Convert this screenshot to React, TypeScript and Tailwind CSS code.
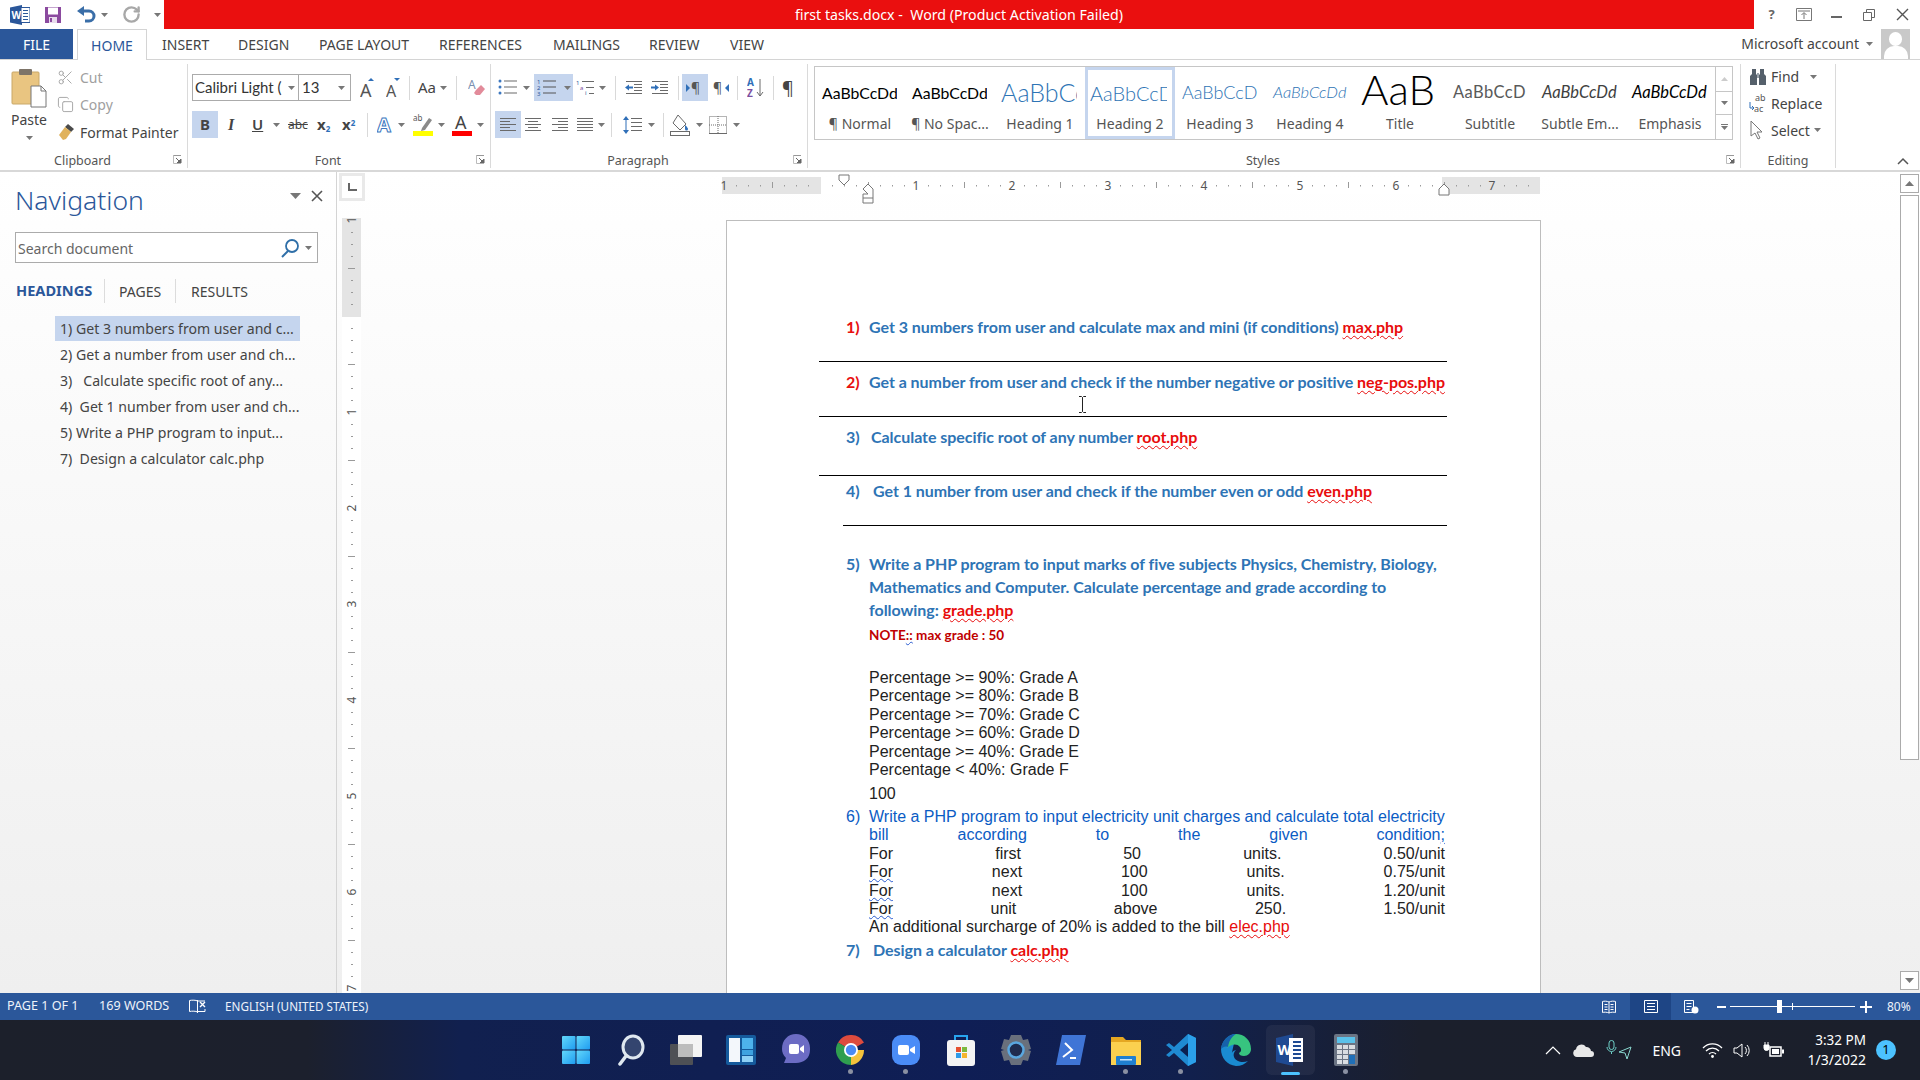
import { Copy, RotateCcw, Scissors } from "lucide-react";
import type { ReactNode } from "react";

const gray = "#6a6a6a";
const blue = "#2b579a";

const tabs = [
  { label: "INSERT", width: "w-[76px]" },
  { label: "DESIGN", width: "w-[81px]" },
  { label: "PAGE LAYOUT", width: "w-[120px]" },
  { label: "REFERENCES", width: "w-[114px]" },
  { label: "MAILINGS", width: "w-[96px]" },
  { label: "REVIEW", width: "w-[81px]" },
  { label: "VIEW", width: "w-[60px]" },
];

const navItems = [
  "2) Get a number from user and ch...",
  "3)\u00a0\u00a0 Calculate specific root of any...",
  "4)\u00a0 Get 1 number from user and ch...",
  "5) Write a PHP program to input...",
  "7)\u00a0 Design a calculator calc.php",
];

const grades = [
  "Percentage >= 90%: Grade A",
  "Percentage >= 80%: Grade B",
  "Percentage >= 70%: Grade C",
  "Percentage >= 60%: Grade D",
  "Percentage >= 40%: Grade E",
  "Percentage < 40%: Grade F",
];

const Caret = ({ className = "" }: { className?: string }) => (
  <svg width="7" height="4" viewBox="0 0 7 4" className={`shrink-0 ${className}`}>
    <path d="M0 0h7L3.5 4z" fill="#777" />
  </svg>
);

const Launcher = () => (
  <svg width="9" height="9" viewBox="0 0 9 9" className="shrink-0">
    <path d="M.5 4V.5H8" fill="none" stroke="#999" />
    <path d="M.5.5V8.5H4" fill="none" stroke="#bbb" />
    <path d="M3 3l4 4M8 4v4H4z" fill="#666" stroke="#666" />
  </svg>
);

const Sep = ({ className = "" }: { className?: string }) => (
  <div className={`w-px h-[24px] bg-[#d9d9d9] shrink-0 ${className}`} />
);

// lines for the align / list buttons
const Lines = ({ rows, width = 18 }: { rows: [number, number][]; width?: number }) => (
  <svg width={width} height="16" viewBox={`0 0 ${width} 16`}>
    {rows.map(([x, w], i) => (
      <rect key={i} x={x} y={1 + i * 3} width={w} height="1" fill={gray} />
    ))}
  </svg>
);

const Bullets = () => (
  <svg width="20" height="17" viewBox="0 0 20 17">
    {[2, 8, 14].map((y) => (
      <g key={y}>
        <circle cx="2" cy={y} r="1.5" fill="#3d78c0" />
        <rect x="6" y={y - 0.5} width="13" height="1" fill={gray} />
      </g>
    ))}
  </svg>
);

const Numbering = () => (
  <svg width="20" height="17" viewBox="0 0 20 17">
    {[2, 8, 14].map((y, i) => (
      <g key={y}>
        <text x="0" y={y + 2.5} fontSize="6" fill={blue} fontFamily="Noto Sans">
          {i + 1}
        </text>
        <rect x="6" y={y - 0.5} width="13" height="1" fill="#555" />
      </g>
    ))}
  </svg>
);

const Multilevel = () => (
  <svg width="20" height="17" viewBox="0 0 20 17">
    <text x="0" y="6" fontSize="6" fill={blue} fontFamily="Noto Sans">1</text>
    <text x="4" y="11" fontSize="6" fill="#7b4fa0" fontFamily="Noto Sans">a</text>
    <text x="9" y="16" fontSize="6" fill={blue} fontFamily="Noto Sans">i</text>
    <rect x="6" y="2" width="12" height="1" fill={gray} />
    <rect x="10" y="8" width="8" height="1" fill={gray} />
    <rect x="13" y="14" width="5" height="1" fill={gray} />
  </svg>
);

const Indent = ({ dir }: { dir: "dec" | "inc" }) => (
  <svg width="18" height="15" viewBox="0 0 18 15">
    {[1, 4, 7, 10, 13].map((y) => (
      <rect key={y} x={y === 1 || y === 13 ? 1 : 9} y={y} width={y === 1 || y === 13 ? 16 : 8} height="1" fill={gray} />
    ))}
    <path
      d={dir === "dec" ? "M0 7.5L4 4.5v2h4v2H4v2z" : "M8 7.5L4 4.5v2H0v2h4v2z"}
      fill="#2f6fb8"
    />
  </svg>
);

const Pilcrow = ({ arrow }: { arrow: "left" | "right" }) => (
  <svg width="18" height="16" viewBox="0 0 18 16">
    {arrow === "left" ? (
      <path d="M0 4l4 4-4 4z" fill="#2f6fb8" />
    ) : (
      <path d="M18 4l-4 4 4 4z" fill="#2f6fb8" />
    )}
    <text x={arrow === "left" ? 5 : 2} y="13" fontSize="14" fill="#555" fontFamily="Noto Sans">
      ¶
    </text>
  </svg>
);

const Sort = () => (
  <svg width="18" height="22" viewBox="0 0 18 22">
    <text x="0" y="9" fontSize="10" fontWeight="700" fill="#2f6fb8" fontFamily="Noto Sans">A</text>
    <text x="0" y="20" fontSize="10" fontWeight="700" fill="#7b4fa0" fontFamily="Noto Sans">Z</text>
    <path d="M13 2v17M10 15l3 4 3-4" fill="none" stroke={gray} />
  </svg>
);

const LineSpacing = () => (
  <svg width="20" height="20" viewBox="0 0 20 20">
    <path d="M3 1L0 5h6zM3 19l3-4H0zM2.5 5h1v10h-1z" fill="#2f6fb8" />
    {[3, 7, 11, 15].map((y) => (
      <rect key={y} x="8" y={y} width="11" height="1" fill={gray} />
    ))}
  </svg>
);

const Shading = () => (
  <svg width="20" height="22" viewBox="0 0 20 22">
    <path d="M8 1l8 9-6 6-7-7z" fill="#fff" stroke={gray} />
    <path d="M15 11c2 2 3 3 3 4a1.5 1.5 0 0 1-3 0z" fill="#2f6fb8" />
    <rect x="0.5" y="17.5" width="19" height="4" fill="#fff" stroke={gray} />
  </svg>
);

const Borders = () => (
  <svg width="18" height="18" viewBox="0 0 18 18">
    <path d="M.5 .5h17v17H.5zM9 0v18M0 9h18" fill="none" stroke={gray} strokeDasharray="1 1" />
    <path d="M0 17.5h18" stroke={gray} />
  </svg>
);

const Paste = () => (
  <svg width="36" height="40" viewBox="0 0 36 40">
    <rect x="1" y="4" width="27" height="32" rx="1" fill="#e9c581" stroke="#c9a868" />
    <rect x="8" y="1" width="13" height="6" rx="1" fill="#7d7468" />
    <path d="M20 18h10l5 5v16H20z" fill="#fff" stroke="#777" />
    <path d="M30 18v5h5" fill="none" stroke="#777" />
  </svg>
);

const Painter = () => (
  <svg width="18" height="18" viewBox="0 0 18 18">
    <path d="M11 1l6 5-3 3-6-5z" fill="#4a4a4a" />
    <path d="M8 4l6 5-5 7-3 1-4-5z" fill="#e0b25c" />
  </svg>
);

const Eraser = () => (
  <svg width="17" height="20" viewBox="0 0 17 20">
    <text x="0" y="11" fontSize="12" fill="#7a8fb0" fontFamily="Noto Sans">A</text>
    <path d="M8 12l5-5 4 4-5 6H8l-2-2z" fill="#e28b9a" />
  </svg>
);

const TextEffect = () => (
  <svg width="18" height="20" viewBox="0 0 18 20">
    <text
      x="0"
      y="17"
      fontSize="20"
      fontWeight="700"
      fill="#fff"
      stroke="#3d78c0"
      strokeWidth="1"
      fontFamily="Noto Sans"
    >
      A
    </text>
  </svg>
);

const Highlight = () => (
  <svg width="20" height="23" viewBox="0 0 20 23">
    <text x="0" y="8" fontSize="8" fill="#555" fontFamily="Noto Sans">ab</text>
    <path d="M9 15l7-10 3 2-7 10-4 1z" fill="#8a8a8a" />
    <rect y="18" width="20" height="5" fill="#ffff00" />
  </svg>
);

const FontColor = () => (
  <svg width="20" height="24" viewBox="0 0 20 24">
    <text x="3" y="16" fontSize="18" fill="#444" fontFamily="Noto Sans">A</text>
    <rect y="18" width="20" height="5" fill="#ff0000" />
  </svg>
);

const GrowFont = ({ up }: { up: boolean }) => (
  <svg width="15" height="21" viewBox="0 0 15 21">
    <text x="0" y="20" fontSize={up ? 18 : 16} fill="#555" fontFamily="Noto Sans">A</text>
    {up ? <path d="M8 4l3-3 3 3z" fill="#2f6fb8" /> : <path d="M8 1h6l-3 3z" fill="#2f6fb8" />}
  </svg>
);

const Binoculars = () => (
  <svg width="18" height="18" viewBox="0 0 18 18">
    <path d="M3 1h4v5l1 1v10H1V8l2-2zM11 1h4v5l2 2v9h-7V7l1-1z" fill="#55606b" />
    <rect x="8" y="5" width="2" height="5" fill="#9aa3ab" />
  </svg>
);

const ReplaceIcon = () => (
  <svg width="18" height="22" viewBox="0 0 18 22">
    <text x="6" y="8" fontSize="9" fill="#555" fontFamily="Noto Sans">ab</text>
    <text x="5" y="19" fontSize="9" fill="#555" fontFamily="Noto Sans">ac</text>
    <path d="M1 9v6h3M3 13l2 2-2 2" fill="none" stroke="#2f6fb8" />
  </svg>
);

const SelectIcon = () => (
  <svg width="14" height="20" viewBox="0 0 14 20">
    <path d="M2 1v15l4-3 3 6 2-1-3-6h5z" fill="#fff" stroke="#777" />
  </svg>
);

const WordLogo = () => (
  <svg width="20" height="20" viewBox="0 0 20 20">
    <path d="M0 2.5L12 0v20L0 17.5z" fill="#2b579a" />
    <rect x="11" y="2.5" width="9" height="15" fill="#fff" stroke="#2b579a" />
    {[5, 8, 11, 14].map((y) => (
      <rect key={y} x="13" y={y} width="5" height="1" fill="#2b579a" />
    ))}
    <text x="1.5" y="14" fontSize="10" fontWeight="700" fill="#fff" fontFamily="Noto Sans">W</text>
  </svg>
);

const SaveIcon = () => (
  <svg width="18" height="18" viewBox="0 0 18 18">
    <path d="M1 1h16v16H1z" fill="#8b4a9f" />
    <rect x="4" y="1.5" width="10" height="7" fill="#fff" />
    <rect x="5" y="11" width="8" height="6" fill="#e8dcec" />
    <rect x="6" y="12" width="2" height="4" fill="#8b4a9f" />
  </svg>
);

const UndoIcon = () => (
  <svg width="19" height="18" viewBox="0 0 19 18">
    <path d="M3 5h9a5 5 0 0 1 0 10H8" fill="none" stroke="#3a6ea8" strokeWidth="3" />
    <path d="M7 0v10L0 5z" fill="#3a6ea8" />
  </svg>
);

// horizontal ruler, a drawing with its own numbers
const HRuler = () => {
  const ticks = [];
  for (let x = 2; x < 818; x += 12) {
    const n = Math.round((x - 2) / 12) % 8;
    if (n === 0) continue;
    ticks.push(
      <rect key={x} x={x} y={n === 4 ? 5 : 8} width="1" height={n === 4 ? 6 : 1.5} fill="#9a9a9a" />
    );
  }
  return (
    <svg width="818" height="27" viewBox="0 0 818 27" className="overflow-visible block">
      <rect width="818" height="17" fill="#e4e4e4" />
      <rect x="99" width="621" height="17" fill="#fff" />
      {ticks}
      {["1", "", "1", "2", "3", "4", "5", "6", "7"].map((t, i) =>
        t ? (
          <text key={i} x={2 + i * 96} y="13" fontSize="12" textAnchor="middle" fill="#555" fontFamily="Noto Sans">
            {t}
          </text>
        ) : null
      )}
      <path d="M117 -2h10v5l-5 5-5-5z" fill="#fff" stroke="#777" />
      <path d="M146 17l-5-5 5-5 5 5v14h-10v-9z" fill="#fff" stroke="#777" />
      <path d="M141 21h10" stroke="#777" />
      <path d="M722 7l5 5v6h-10v-6z" fill="#fff" stroke="#777" />
    </svg>
  );
};

const VRuler = () => {
  const ticks = [];
  for (let y = 2; y < 775; y += 12) {
    const n = Math.round((y - 2) / 12) % 8;
    if (n === 0) continue;
    ticks.push(
      <rect key={y} x={n === 4 ? 6 : 9} y={y} width={n === 4 ? 7 : 2} height="1" fill="#9a9a9a" />
    );
  }
  return (
    <svg width="19" height="775" viewBox="0 0 19 775" className="block">
      <rect width="19" height="775" fill="#fff" />
      <rect width="19" height="99" fill="#e4e4e4" />
      {ticks}
      {["1", "", "1", "2", "3", "4", "5", "6", "7"].map((t, i) => {
        const y = 2 + i * 96;
        return t ? (
          <text
            key={i}
            x="10"
            y={y}
            fontSize="12"
            textAnchor="middle"
            fill="#555"
            fontFamily="Noto Sans"
            transform={`rotate(-90 10 ${y}) translate(0 4)`}
          >
            {t}
          </text>
        ) : null;
      })}
    </svg>
  );
};

// taskbar icons
const WinIcon = () => (
  <svg width="30" height="30" viewBox="0 0 30 30">
    <defs>
      <linearGradient id="win" x1="0" y1="0" x2="1" y2="1">
        <stop offset="0" stopColor="#63d8fb" />
        <stop offset="1" stopColor="#1f9cf0" />
      </linearGradient>
    </defs>
    <rect x="1" y="1" width="13.5" height="13.5" rx="1" fill="url(#win)" />
    <rect x="15.5" y="1" width="13.5" height="13.5" rx="1" fill="url(#win)" />
    <rect x="1" y="15.5" width="13.5" height="13.5" rx="1" fill="url(#win)" />
    <rect x="15.5" y="15.5" width="13.5" height="13.5" rx="1" fill="url(#win)" />
  </svg>
);

const SearchTask = () => (
  <svg width="28" height="32" viewBox="0 0 28 32">
    <ellipse cx="16" cy="13" rx="10" ry="11" fill="#34456f" stroke="#dfe8f0" strokeWidth="3" />
    <path d="M9 22L3 30" stroke="#dfe8f0" strokeWidth="3.5" strokeLinecap="round" />
  </svg>
);

const TaskView = () => (
  <svg width="32" height="30" viewBox="0 0 32 30">
    <rect x="8" y="0" width="24" height="22" rx="1" fill="#f4f4f4" />
    <rect x="0" y="9" width="23" height="21" rx="1" fill="#555" fillOpacity="0.9" />
    <rect x="8" y="9" width="15" height="13" fill="#bdbdbd" />
  </svg>
);

const Widgets = () => (
  <svg width="30" height="30" viewBox="0 0 30 30">
    <rect width="30" height="30" rx="2" fill="#155a9c" />
    <rect x="3" y="3" width="11" height="24" fill="#f3f7fb" />
    <rect x="16" y="3" width="11" height="11" fill="#4db2ec" />
    <rect x="16" y="15" width="11" height="5" fill="#3ea2e0" />
    <rect x="16" y="21" width="11" height="6" fill="#8dd0f5" />
  </svg>
);

const TeamsChat = () => (
  <svg width="30" height="32" viewBox="0 0 30 32">
    <path d="M15 0c8 0 14 6 14 14v2c0 8-6 13-14 13H3l2-5C2 21 1 18 1 15 1 6 7 0 15 0z" fill="#6c6cc4" />
    <rect x="8" y="10" width="10" height="10" rx="2" fill="#fff" />
    <path d="M19 14l4-3v8l-4-3z" fill="#fff" />
  </svg>
);

const Chrome = () => (
  <svg width="30" height="30" viewBox="0 0 30 30">
    <path d="M15 15L2 7.5A15 15 0 0 1 28 7.5z" fill="#dd4b3e" />
    <path d="M15 15H28A15 15 0 0 1 15 30z" fill="#f5c33b" />
    <path d="M15 15L15 30A15 15 0 0 1 2 7.5z" fill="#2f9e4f" />
    <circle cx="15" cy="15" r="7" fill="#fff" />
    <circle cx="15" cy="15" r="5.2" fill="#4b8bf4" />
  </svg>
);

const ZoomIcon = () => (
  <svg width="28" height="30" viewBox="0 0 28 30">
    <rect width="28" height="30" rx="9" fill="#4a8cf7" />
    <rect x="6" y="10" width="11" height="10" rx="2" fill="#fff" />
    <path d="M18 14l5-3v8l-5-3z" fill="#fff" />
  </svg>
);

const Store = () => (
  <svg width="30" height="32" viewBox="0 0 30 32">
    <path d="M9 7V2h12v5" fill="none" stroke="#27a4ee" strokeWidth="2" />
    <rect x="1" y="6" width="28" height="26" rx="3" fill="#f4f4f4" />
    <rect x="10" y="13" width="5" height="5" fill="#e5502f" />
    <rect x="16" y="13" width="5" height="5" fill="#7cb93f" />
    <rect x="10" y="19" width="5" height="5" fill="#2f9be8" />
    <rect x="16" y="19" width="5" height="5" fill="#f5b52e" />
  </svg>
);

const Gear = () => (
  <svg width="30" height="32" viewBox="0 0 30 32">
    <path
      d="M10 1h10l2 5 5-1 3 10-3 1 3 1-3 10-5-1-2 5H10l-2-5-5 1L0 17l3-1-3-1L3 5l5 1z"
      fill="#69707c"
    />
    <circle cx="15" cy="16" r="7.5" fill="#1f2c4f" stroke="#5aa7df" strokeWidth="2.5" />
  </svg>
);

const Terminal = () => (
  <svg width="30" height="30" viewBox="0 0 30 30">
    <path d="M6 0h24l-6 30H0z" fill="#3f75d6" />
    <path d="M9 8l7 7-9 7" fill="none" stroke="#fff" strokeWidth="2" />
    <path d="M14 23h6" stroke="#fff" strokeWidth="2" />
  </svg>
);

const Explorer = () => (
  <svg width="30" height="30" viewBox="0 0 30 30">
    <path d="M0 2h12l3 3h15v25H0z" fill="#e5a722" />
    <path d="M0 7h30v23H0z" fill="#fbd04f" />
    <rect x="5" y="21" width="20" height="9" rx="1" fill="#1f7fd0" />
    <rect x="9" y="24" width="12" height="1.5" fill="#c7e4fb" />
  </svg>
);

const VSCode = () => (
  <svg width="30" height="32" viewBox="0 0 30 32">
    <path d="M22 0l8 4v24l-8 4L8 19l-5 4-3-2 6-5-6-5 3-2 5 4z" fill="#1f8ad2" />
    <path d="M22 9l-8 7 8 7z" fill="#0b1f4f" />
    <path d="M22 0l8 4v24l-8 4z" fill="#2ba0ea" />
  </svg>
);

const Edge = () => (
  <svg width="30" height="32" viewBox="0 0 30 32">
    <path d="M15 0C7 0 1 7 0 15c0 9 6 16 15 17 5 0 9-2 12-5-5 2-12 1-14-4-1-3 0-5 2-7-4 1-5 4-5 7" fill="#1a8bd1" />
    <path d="M15 0c8 0 15 6 15 15 0 4-3 7-7 7-3 0-5-1-5-3 2-1 3-3 1-6-3-4-9-3-13 1C7 8 10 1 15 0z" fill="#37c47f" />
    <path d="M7 13C8 5 14 0 15 0 8 0 1 6 0 15c2-2 4-3 7-2z" fill="#1662ab" />
  </svg>
);

const WordTask = () => (
  <svg width="30" height="32" viewBox="0 0 30 32">
    <path d="M0 4L17 0v32L0 28z" fill="#1f4a92" />
    <rect x="13" y="4" width="14" height="24" fill="#fff" />
    {[7, 11, 15, 19, 23].map((y) => (
      <rect key={y} x="17" y={y} width="8" height="2" fill="#1f4a92" />
    ))}
    <text x="1.5" y="21" fontSize="14" fontWeight="700" fill="#fff" fontFamily="Noto Sans">W</text>
  </svg>
);

const Calculator = () => (
  <svg width="24" height="32" viewBox="0 0 24 32">
    <rect width="24" height="32" rx="2" fill="#6b7484" />
    <rect x="3" y="3" width="18" height="6" fill="#5ac1ea" />
    {[11, 16, 21, 26].flatMap((y) =>
      [3, 9].map((x) => <rect key={`${x}${y}`} x={x} y={y} width="5" height="4" fill="#d9dde2" />)
    )}
    {[11, 16].map((y) => <rect key={y} x="15" y={y} width="6" height="4" fill="#d9dde2" />)}
    <rect x="15" y="21" width="6" height="9" fill="#1f6fb8" />
  </svg>
);

const taskItems = [
  { icon: <WinIcon /> },
  { icon: <SearchTask /> },
  { icon: <TaskView /> },
  { icon: <Widgets /> },
  { icon: <TeamsChat /> },
  { icon: <Chrome />, running: true },
  { icon: <ZoomIcon />, running: true },
  { icon: <Store /> },
  { icon: <Gear /> },
  { icon: <Terminal /> },
  { icon: <Explorer />, running: true },
  { icon: <VSCode />, running: true },
  { icon: <Edge /> },
  { icon: <WordTask />, active: true },
  { icon: <Calculator />, running: true },
];

const styleCells = [
  { sample: "AaBbCcDd", label: "¶ Normal", cls: "text-[15.8px] text-black font-['Lato',sans-serif] pl-[4px]" },
  { sample: "AaBbCcDd", label: "¶ No Spac...", cls: "text-[15.8px] text-black font-['Lato',sans-serif] pl-[4px]" },
  { sample: "AaBbCc", label: "Heading 1", cls: "text-[25px] text-[#2e74b5] font-light font-['Lato',sans-serif] pl-[3px]" },
  { sample: "AaBbCcD", label: "Heading 2", cls: "text-[20px] text-[#2e74b5] font-light font-['Lato',sans-serif] pl-[2px]", selected: true },
  { sample: "AaBbCcD", label: "Heading 3", cls: "text-[18px] text-[#2e74b5] font-light font-['Lato',sans-serif] pl-[4px]" },
  { sample: "AaBbCcDd", label: "Heading 4", cls: "text-[16.5px] italic text-[#2e74b5] font-light font-['Lato',sans-serif] pl-[5px]" },
  { sample: "AaBb", label: "Title", cls: "text-[42px] leading-[42px] text-black font-light font-['Lato',sans-serif] pl-[3px] pb-[8px]" },
  { sample: "AaBbCcD", label: "Subtitle", cls: "text-[16.5px] text-[#595959] tracking-[0.4px] font-['Lato',sans-serif] pl-[5px]" },
  { sample: "AaBbCcDd", label: "Subtle Em...", cls: "text-[16.5px] italic text-[#404040] font-['Lato',sans-serif] pl-[4px]" },
  { sample: "AaBbCcDd", label: "Emphasis", cls: "text-[16.5px] italic text-black font-['Lato',sans-serif] pl-[4px]" },
];

const Group = ({ label, width, children, launcher = true }: { label: string; width: string; children: ReactNode; launcher?: boolean }) => (
  <div className={`${width} h-[104px] border-r border-[#dadada] flex flex-col shrink-0`}>
    <div className="h-[92px]">{children}</div>
    <div className={`relative flex-1 flex items-center justify-center text-[12.5px] leading-[14px] text-[#555] ${launcher ? "pr-[22px]" : ""}`}>
      {label}
      {launcher && (
        <span className="absolute right-[5px] top-[1px]">
          <Launcher />
        </span>
      )}
    </div>
  </div>
);

const Heading = ({ num, red, numW, children }: { num: string; red?: boolean; numW: string; children: ReactNode }) => (
  <div className="h-[22px] pb-[2px] flex items-center pl-[27px] font-['Lato',sans-serif] font-bold text-[16px] tracking-[-0.04px] text-[#2e74b5] whitespace-nowrap">
    <span className={`${numW} shrink-0 ${red ? "text-[#e81010]" : ""}`}>{num}</span>
    <span>{children}</span>
  </div>
);

const Php = ({ children }: { children: string }) => (
  <span className="text-[#e80c0c] underline decoration-wavy decoration-[#e80c0c] decoration-1 underline-offset-2">
    {children}
  </span>
);

const Squiggle = ({ children }: { children: string }) => (
  <span className="underline decoration-wavy decoration-[#2a5bd0] decoration-1 underline-offset-1">{children}</span>
);

const BodyRow = ({ words, color = "" }: { words: ReactNode[]; color?: string }) => (
  <div className={`h-[18.4px] ml-[50px] w-[576px] flex items-center justify-between ${color}`}>
    {words.map((w, i) => (
      <span key={i}>{w}</span>
    ))}
  </div>
);

export default function App() {
  return (
    <div className="w-[1920px] h-[1080px] flex flex-col overflow-hidden bg-white text-[#444] font-['Noto_Sans',sans-serif]">
      {/* Title bar */}
      <div className="h-[29px] flex shrink-0">
        <div className="w-[164px] flex items-center pl-[10px]">
          <WordLogo />
          <span className="ml-[14px]"><SaveIcon /></span>
          <span className="ml-[15px]"><UndoIcon /></span>
          <Caret className="ml-[5px]" />
          <RotateCcw size={19} strokeWidth={3} color="#a8a8a8" className="ml-[14px] -scale-x-100" />
          <Caret className="ml-[13px]" />
        </div>
        <div className="flex-1 bg-[#ea0f0f] flex items-center justify-center text-white text-[14.2px]">
          first tasks.docx -&nbsp; Word (Product Activation Failed)
        </div>
        <div className="w-[166px] flex items-center text-[#666]">
          <span className="w-[17px] ml-[9px] text-center text-[13px] font-bold">?</span>
          <svg width="16" height="13" viewBox="0 0 16 13" className="ml-[16px]">
            <path d="M.5.5h15v12H.5zM2 3h12M8 11V5M5.5 7L8 4.5 10.5 7" fill="none" stroke="#777" />
          </svg>
          <div className="w-[11px] h-[2px] bg-[#666] ml-[19px] mt-[5px]" />
          <svg width="12" height="12" viewBox="0 0 12 12" className="ml-[21px]">
            <path d="M3.5 3V.5h8v8H9M.5 3.5h8v8h-8z" fill="#fff" stroke="#666" />
          </svg>
          <svg width="13" height="13" viewBox="0 0 13 13" className="ml-[21px]">
            <path d="M1 1l11 11M12 1L1 12" stroke="#555" strokeWidth="1.4" />
          </svg>
        </div>
      </div>

      {/* Tabs */}
      <div className="h-[31px] flex shrink-0 border-b border-[#d4d4d4] text-[14px]">
        <div className="w-[73px] h-[30px] bg-[#2b579a] text-white flex items-center justify-center">FILE</div>
        <div className="ml-[4px] w-[70px] h-[31px] bg-white border-x border-t border-[#d4d4d4] text-[#2b579a] flex items-center justify-center">
          HOME
        </div>
        <div className="w-[15px]" />
        {tabs.map((t) => (
          <div key={t.label} className={`${t.width} flex items-center whitespace-nowrap`}>
            {t.label}
          </div>
        ))}
        <div className="ml-auto flex items-center">
          <span className="-mt-[2px]">Microsoft account</span>
          <Caret className="ml-[7px] mr-[8px]" />
          <div className="w-[29px] h-[30px] bg-[#c9c9c9] overflow-hidden flex flex-col items-center mr-[10px]">
            <div className="w-[13px] h-[15px] mt-[3px] rounded-full bg-white" />
            <div className="w-[24px] h-[14px] rounded-t-[10px] bg-white" />
          </div>
        </div>
      </div>

      {/* Ribbon */}
      <div className="h-[112px] flex shrink-0 pt-[4px] border-b-2 border-[#d8d8d8]">
        <Group label="Clipboard" width="w-[188px]">
          <div className="flex h-full">
            <div className="w-[57px] flex flex-col items-center pt-[4px] pl-[1px]">
              <Paste />
              <span className="text-[14px] leading-[20px] mt-[2px]">Paste</span>
              <Caret className="mt-[6px]" />
            </div>
            <div className="flex flex-col text-[14px] -mt-[1px]">
              <div className="h-[28px] flex items-center text-[#a0a0a0]">
                <Scissors size={17} strokeWidth={1.4} color="#a8a8a8" className="mr-[6px]" />Cut
              </div>
              <div className="h-[27px] flex items-center text-[#a0a0a0]">
                <Copy size={17} strokeWidth={1.4} color="#a8a8a8" className="mr-[6px]" />Copy
              </div>
              <div className="h-[28px] flex items-center whitespace-nowrap">
                <span className="mr-[5px]"><Painter /></span>Format Painter
              </div>
            </div>
          </div>
        </Group>

        <Group label="Font" width="w-[303px]">
          <div className="pt-[10px] pl-[4px]">
            <div className="h-[27px] flex items-center">
              <div className="w-[107px] h-[27px] border border-[#ababab] flex items-center pl-[2px] pr-[3px] text-[15px] text-[#333] font-['Lato',sans-serif] whitespace-nowrap justify-between">
                <span>Calibri Light (</span><Caret />
              </div>
              <div className="w-[53px] h-[27px] -ml-px border border-[#ababab] flex items-center pl-[3px] pr-[5px] text-[15px] text-[#333] justify-between font-['Lato',sans-serif]">
                <span>13</span><Caret />
              </div>
              <span className="ml-[9px] w-[15px]"><GrowFont up /></span>
              <span className="ml-[11px] w-[15px]"><GrowFont up={false} /></span>
              <Sep className="ml-[8px]" />
              <span className="ml-[8px] w-[20px] text-[15px] whitespace-nowrap">Aa</span>
              <Caret className="ml-[2px]" />
              <Sep className="ml-[9px]" />
              <span className="ml-[11px]"><Eraser /></span>
            </div>
            <div className="h-[27px] mt-[10px] flex items-center">
              <div className="w-[26px] h-[27px] bg-[#c5d5ee] flex items-center justify-center font-bold text-[15px]">B</div>
              <span className="ml-[10px] w-[10px] italic font-['Liberation_Serif',serif] font-bold text-[16px]">I</span>
              <span className="ml-[14px] w-[13px] text-[15px] font-semibold underline">U</span>
              <Caret className="ml-[8px]" />
              <span className="ml-[8px] w-[20px] text-[12px] line-through">abc</span>
              <span className="ml-[9px] w-[16px] text-[15px] font-bold whitespace-nowrap">x<sub className="text-[8px] text-[#2f6fb8]">2</sub></span>
              <span className="ml-[9px] w-[16px] text-[15px] font-bold whitespace-nowrap">x<sup className="text-[8px] text-[#2f6fb8]">2</sup></span>
              <Sep className="ml-[9px]" />
              <span className="ml-[9px] w-[18px]"><TextEffect /></span>
              <Caret className="ml-[3px]" />
              <span className="ml-[8px] w-[20px]"><Highlight /></span>
              <Caret className="ml-[5px]" />
              <span className="ml-[7px] w-[20px]"><FontColor /></span>
              <Caret className="ml-[5px]" />
            </div>
          </div>
        </Group>

        <Group label="Paragraph" width="w-[317px]">
          <div className="pt-[10px]">
            <div className="h-[27px] flex items-center pl-[7px]">
              <Bullets />
              <Caret className="ml-[5px]" />
              <div className="ml-[4px] w-[39px] h-[27px] bg-[#c5d5ee] flex items-center pl-[3px]">
                <Numbering />
                <Caret className="ml-[7px]" />
              </div>
              <span className="ml-[3px] w-[20px]"><Multilevel /></span>
              <Caret className="ml-[3px]" />
              <Sep className="ml-[9px]" />
              <span className="ml-[9px]"><Indent dir="dec" /></span>
              <span className="ml-[8px]"><Indent dir="inc" /></span>
              <Sep className="ml-[9px]" />
              <div className="ml-[3px] w-[26px] h-[27px] bg-[#c5d5ee] flex items-center justify-center"><Pilcrow arrow="left" /></div>
              <span className="ml-[3px]"><Pilcrow arrow="right" /></span>
              <Sep className="ml-[8px]" />
              <span className="ml-[9px]"><Sort /></span>
              <Sep className="ml-[8px]" />
              <span className="ml-[8px] text-[18px] leading-none">¶</span>
            </div>
            <div className="h-[27px] mt-[10px] flex items-center pl-[4px]">
              <div className="w-[26px] h-[27px] bg-[#c5d5ee] flex items-center justify-center">
                <Lines rows={[[1, 16], [1, 10], [1, 16], [1, 10], [1, 16]]} />
              </div>
              <span className="ml-[3px]"><Lines rows={[[1, 16], [4, 10], [1, 16], [4, 10], [1, 16]]} /></span>
              <span className="ml-[9px]"><Lines rows={[[1, 16], [7, 10], [1, 16], [7, 10], [1, 16]]} /></span>
              <span className="ml-[7px]"><Lines rows={[[1, 16], [1, 16], [1, 16], [1, 16], [1, 16]]} /></span>
              <Caret className="ml-[4px]" />
              <Sep className="ml-[6px]" />
              <span className="ml-[11px]"><LineSpacing /></span>
              <Caret className="ml-[5px]" />
              <Sep className="ml-[8px]" />
              <span className="ml-[6px]"><Shading /></span>
              <Caret className="ml-[6px]" />
              <span className="ml-[6px]"><Borders /></span>
              <Caret className="ml-[6px]" />
            </div>
          </div>
        </Group>

        <Group label="Styles" width="w-[933px]">
          <div className="pt-[2px] pl-[6px]">
            <div className="w-[919px] h-[74px] border border-[#c6c6c6] flex bg-white">
              {styleCells.map((s) => (
                <div
                  key={s.label}
                  className={`w-[90px] h-[72px] shrink-0 flex flex-col overflow-hidden ${s.selected ? "border-[3px] border-[#c5d5ee]" : "border-[3px] border-transparent"}`}
                >
                  <div className={`h-[45px] mr-[5px] flex items-center overflow-hidden whitespace-nowrap ${s.cls}`}>{s.sample}</div>
                  <div className="text-center text-[14px] text-[#555] whitespace-nowrap leading-[18px]">{s.label}</div>
                </div>
              ))}
              <div className="w-[17px] border-l border-[#c6c6c6] flex flex-col">
                <div className="h-[25px] flex items-center justify-center border-b border-[#c6c6c6]">
                  <svg width="7" height="4" viewBox="0 0 7 4"><path d="M3.5 0L7 4H0z" fill="#ccc" /></svg>
                </div>
                <div className="h-[23px] flex items-center justify-center border-b border-[#c6c6c6]"><Caret /></div>
                <div className="flex-1 flex flex-col items-center justify-center gap-[1px]">
                  <div className="w-[7px] h-px bg-[#777]" />
                  <Caret />
                </div>
              </div>
            </div>
          </div>
        </Group>

        <Group label="Editing" width="w-[95px]" launcher={false}>
          <div className="pl-[8px] -mt-[1px] text-[14px]">
            <div className="h-[27px] flex items-center">
              <span className="w-[22px]"><Binoculars /></span>Find<Caret className="ml-[11px]" />
            </div>
            <div className="h-[27px] flex items-center">
              <span className="w-[22px]"><ReplaceIcon /></span>Replace
            </div>
            <div className="h-[26px] flex items-center">
              <span className="w-[22px]"><SelectIcon /></span>Select<Caret className="ml-[4px]" />
            </div>
          </div>
        </Group>

        <div className="flex-1 flex items-end justify-end pr-[11px] pb-[5px]">
          <svg width="12" height="8" viewBox="0 0 12 8"><path d="M1 7l5-5 5 5" fill="none" stroke="#555" strokeWidth="1.5" /></svg>
        </div>
      </div>

      {/* Work area */}
      <div className="flex-1 min-h-0 flex bg-linear-to-b from-white to-[#efefef]">
        {/* Navigation pane */}
        <div className="w-[337px] shrink-0 border-r border-[#d4d4d4]">
          <div className="h-[60px] flex items-center pl-[15px] pr-[13px]">
            <span className="text-[26.5px] font-light text-[#2b579a] flex-1 -mt-[2px]">Navigation</span>
            <svg width="11" height="6" viewBox="0 0 11 6" className="mr-[10px] mb-[12px]"><path d="M0 0h11L5.5 6z" fill="#777" /></svg>
            <svg width="12" height="12" viewBox="0 0 12 12" className="mb-[12px]"><path d="M1 1l10 10M11 1L1 11" stroke="#555" strokeWidth="1.6" /></svg>
          </div>
          <div className="ml-[15px] w-[303px] h-[31px] border border-[#ababab] bg-white flex items-center pl-[2px] pr-[5px] text-[14px] text-[#666]">
            <span className="flex-1 mt-[2px]">Search document</span>
            <svg width="20" height="20" viewBox="0 0 20 20" className="mr-[5px]">
              <circle cx="12" cy="8" r="6" fill="none" stroke="#2f6fa8" strokeWidth="1.8" />
              <path d="M8 13l-6 6" stroke="#2f6fa8" strokeWidth="2" />
            </svg>
            <Caret />
          </div>
          <div className="h-[28px] mt-[14px] pl-[16px] flex items-center text-[14px]">
            <span className="w-[88px] font-bold text-[14.6px] text-[#2b579a]">HEADINGS</span>
            <div className="w-px h-[24px] bg-[#dcdcdc]" />
            <span className="ml-[14px] w-[56px]">PAGES</span>
            <div className="w-px h-[24px] bg-[#dcdcdc]" />
            <span className="ml-[15px]">RESULTS</span>
          </div>
          <div className="mt-[11px] ml-[55px] w-[245px] text-[14.1px] whitespace-nowrap">
            <div className="h-[25px] mb-px bg-[#c5d5ee] pl-[5px] flex items-center">1) Get 3 numbers from user and c...</div>
            {navItems.map((t) => (
              <div key={t} className="h-[26px] pl-[5px] flex items-center">{t}</div>
            ))}
          </div>
        </div>

        {/* Vertical ruler */}
        <div className="w-[29px] shrink-0 pl-[2px]">
          <div className="w-[26px] h-[28px] bg-[#e9e9e9] p-[3px] mt-[1px]">
            <div className="w-full h-full bg-white flex items-center justify-center">
              <div className="w-[9px] h-[8px] border-l-2 border-b-2 border-[#666]" />
            </div>
          </div>
          <div className="mt-[17px] pl-[3px]">
            <VRuler />
          </div>
        </div>

        {/* Document */}
        <div className="flex-1 min-w-0 flex flex-col relative">
          <div className="ml-[356px] mt-[5px] h-[17px]">
            <HRuler />
          </div>
          <div className="ml-[360px] w-[815px] flex-1 mt-[26px] bg-white border-x border-t border-[#bdbdbd] overflow-hidden pt-[96px] pl-[92px]">
            <div className="w-[628px]">
              <Heading num="1)" red numW="w-[23px]">
                Get 3 numbers from user and calculate max and mini (if conditions) <Php>max.php</Php>
              </Heading>
              <div className="mt-[22px] h-px bg-black" />
              <div className="mt-[10px]">
                <Heading num="2)" red numW="w-[23px]">
                  Get a number from user and check if the number negative or positive <Php>neg-pos.php</Php>
                </Heading>
              </div>
              <div className="mt-[22px] h-px bg-black" />
              <div className="mt-[10px]">
                <Heading num="3)" numW="w-[25px]">
                  Calculate specific root of any number <Php>root.php</Php>
                </Heading>
              </div>
              <div className="mt-[26px] h-px bg-black" />
              <div className="mt-[5px]">
                <Heading num="4)" numW="w-[27px]">
                  Get 1 number from user and check if the number even or odd <Php>even.php</Php>
                </Heading>
              </div>
              <div className="mt-[22px] ml-[24px] h-px bg-black" />

              <div className="mt-[26px] pl-[27px] flex font-['Lato',sans-serif] font-bold text-[16px] tracking-[-0.04px] leading-[23px] text-[#2e74b5] whitespace-nowrap">
                <span className="w-[23px] shrink-0">5)</span>
                <div>
                  <div>Write a PHP program to input marks of five subjects Physics, Chemistry, Biology,</div>
                  <div>Mathematics and Computer. Calculate percentage and grade according to</div>
                  <div>following: <Php>grade.php</Php></div>
                </div>
              </div>
              <div className="mt-[5px] ml-[50px] h-[18px] flex items-center font-['Lato',sans-serif] font-bold text-[13.5px] text-[#c00000] whitespace-nowrap">
                NOTE<Squiggle>::</Squiggle>&nbsp;max grade : 50
              </div>

              <div className="mt-[25px] ml-[50px] font-['Liberation_Sans',sans-serif] text-[16px] leading-[18.4px] text-[#222]">
                {grades.map((g) => (
                  <div key={g} className="h-[18.4px]">{g}</div>
                ))}
                <div className="mt-[5.6px] h-[18px]">100</div>
              </div>

              <div className="mt-[5px] font-['Liberation_Sans',sans-serif] text-[16px] leading-[18.4px] text-[#222]">
                <div className="h-[18.4px] flex items-center pl-[27px] text-[#0b5cc4] whitespace-nowrap">
                  <span className="w-[23px] shrink-0">6)</span>
                  <span>Write a PHP program to input electricity unit charges and calculate total electricity</span>
                </div>
                <BodyRow color="text-[#0b5cc4]" words={["bill", "according", "to", "the", "given", <>condition<Squiggle>;</Squiggle></>]} />
                <BodyRow words={["For", "first", "50", "units.", "0.50/unit"]} />
                <BodyRow words={[<Squiggle>For</Squiggle>, "next", "100", "units.", "0.75/unit"]} />
                <BodyRow words={[<Squiggle>For</Squiggle>, "next", "100", "units.", "1.20/unit"]} />
                <BodyRow words={[<Squiggle>For</Squiggle>, "unit", "above", "250.", "1.50/unit"]} />
                <div className="h-[18.4px] ml-[50px] whitespace-nowrap">
                  An additional surcharge of 20% is added to the bill{" "}
                  <span className="text-[#e80c0c] underline decoration-wavy decoration-[#e80c0c] decoration-1 underline-offset-2">elec.php</span>
                </div>
              </div>
              <div className="mt-[3px]">
                <Heading num="7)" numW="w-[27px]">
                  Design a calculator <Php>calc.php</Php>
                </Heading>
              </div>
            </div>
          </div>

          {/* mouse cursor over the page */}
          <svg width="9" height="17" viewBox="0 0 9 17" className="absolute left-[712px] top-[224px]">
            <path d="M1 .5h2.500L4.500 1.500 5.500 .5H8M4.500 1.500V15.500M1 16.500h2.500L4.500 15.500 5.500 16.500H8" fill="none" stroke="#222" />
          </svg>
        </div>

        {/* Scrollbar */}
        <div className="w-[20px] shrink-0 pt-[2px] flex flex-col">
          <div className="h-[19px] w-[19px] border border-[#ababab] bg-white flex items-center justify-center">
            <svg width="9" height="5" viewBox="0 0 9 5"><path d="M4.500 0L9 5H0z" fill="#777" /></svg>
          </div>
          <div className="mt-[2px] h-[565px] w-[19px] border border-[#ababab] bg-white" />
          <div className="flex-1" />
          <div className="h-[19px] w-[19px] border border-[#ababab] bg-white flex items-center justify-center mb-[3px]">
            <svg width="9" height="5" viewBox="0 0 9 5"><path d="M0 0h9L4.500 5z" fill="#777" /></svg>
          </div>
        </div>
      </div>

      {/* Status bar */}
      <div className="h-[27px] shrink-0 bg-[#2b579a] text-[#eef3fa] text-[12.6px] flex items-center">
        <span className="ml-[7px] w-[92px]">PAGE 1 OF 1</span>
        <span className="w-[90px]">169 WORDS</span>
        <svg width="17" height="15" viewBox="0 0 17 15">
          <path d="M8.500 2C7 1 3 1 .5 1.500v11C3 12 7 12 8.500 13zM8.500 1v13" fill="none" stroke="#fff" />
          <path d="M11 3l5 5M16 3l-5 5" stroke="#fff" strokeWidth="1.400" />
          <path d="M8.500 2h7.500M8.500 12.500h7.500V10" fill="none" stroke="#fff" />
        </svg>
        <span className="ml-[19px] text-[11.7px]">ENGLISH (UNITED STATES)</span>
        <div className="ml-auto flex items-center h-full">
          <svg width="14" height="14" viewBox="0 0 14 14">
            <path d="M7 2C5 1 2 1 .5 1.500v11C2 12 5 12 7 13c2-1 5-1 6.500-.5v-11C12 1 9 1 7 2zM7 2v11" fill="none" stroke="#fff" />
            <path d="M2.500 4.500h3M2.500 7h3M2.500 9.500h3M8.500 4.500h3M8.500 7h3M8.500 9.500h3" stroke="#fff" />
          </svg>
          <div className="ml-[14px] w-[41px] h-full bg-[#1e4585] flex items-center justify-center">
            <svg width="14" height="13" viewBox="0 0 14 13">
              <path d="M.5.5h13v12H.5zM3 3.500h8M3 6.500h8M3 9.500h8" fill="none" stroke="#fff" />
            </svg>
          </div>
          <svg width="15" height="14" viewBox="0 0 15 14" className="ml-[13px]">
            <path d="M.5.5h9v12H.5zM2.500 3.500h5M2.500 6.500h5M2.500 9.500h3" fill="none" stroke="#fff" />
            <circle cx="11" cy="10" r="3.500" fill="#fff" />
          </svg>
          <div className="ml-[18px] w-[9px] h-[2px] bg-white" />
          <div className="ml-[4px] w-[125px] h-px bg-white relative">
            <div className="absolute left-[47px] top-[-6px] w-[5px] h-[13px] bg-white" />
            <div className="absolute left-[62px] top-[-3px] w-px h-[7px] bg-white" />
          </div>
          <svg width="12" height="12" viewBox="0 0 12 12" className="ml-[5px]"><path d="M5 0h2v5h5v2H7v5H5V7H0V5h5z" fill="#fff" /></svg>
          <span className="ml-[15px] w-[33px] text-[12px]">80%</span>
        </div>
      </div>

      {/* Taskbar */}
      <div className="h-[60px] shrink-0 flex items-center text-white bg-[linear-gradient(90deg,#1c202b_0%,#1c202d_16%,#11204f_24%,#0f1e55_50%,#11204d_62%,#1b1f2c_74%,#1b1f2b_100%)]">
        <div className="ml-[548px] flex">
          {taskItems.map((t, i) => (
            <div key={i} className="relative w-[55px] h-[60px] flex items-center justify-center">
              {t.active && <div className="absolute left-[3px] top-[5px] w-[49px] h-[50px] rounded-md bg-white/5" />}
              <span className="relative">{t.icon}</span>
              {t.running && <div className="absolute bottom-[6px] left-[25px] w-[5px] h-[5px] rounded-full bg-[#8a90a2]" />}
              {t.active && <div className="absolute bottom-[5px] left-[18px] w-[19px] h-[3px] rounded-full bg-[#4cc2ff]" />}
            </div>
          ))}
        </div>
        <div className="ml-auto flex items-center text-[14px]">
          <svg width="16" height="9" viewBox="0 0 16 9"><path d="M1 8l7-7 7 7" fill="none" stroke="#fff" strokeWidth="1.200" /></svg>
          <svg width="21" height="14" viewBox="0 0 21 14" className="ml-[12px]">
            <path d="M4 14a4 4 0 0 1-1-7.800A5.500 5.500 0 0 1 13 4a4.500 4.500 0 0 1 5 4 3 3 0 0 1 0 6z" fill="#e8e8e8" />
          </svg>
          <svg width="26" height="20" viewBox="0 0 26 20" className="ml-[12px]">
            <rect x="3" y="0.500" width="5" height="9" rx="2.500" fill="none" stroke="#6fd0c8" />
            <path d="M1 7a4.500 4.500 0 0 0 9 0M5.500 12v2" fill="none" stroke="#6fd0c8" />
            <path d="M25 7l-12 5 6 1 2 6z" fill="none" stroke="#8ad8d0" />
          </svg>
          <span className="ml-[20px]">ENG</span>
          <svg width="21" height="16" viewBox="0 0 21 16" className="ml-[21px]">
            <path d="M1 6a13 13 0 0 1 19 0M4 9a9 9 0 0 1 13 0M7 12a5 5 0 0 1 7 0" fill="none" stroke="#fff" strokeWidth="1.300" />
            <circle cx="10.500" cy="14.500" r="1.400" fill="#fff" />
          </svg>
          <svg width="20" height="15" viewBox="0 0 20 15" className="ml-[10px]">
            <path d="M1 5h3l5-4v13l-5-4H1z" fill="none" stroke="#fff" />
            <path d="M12 4a5 5 0 0 1 0 7M14 2a8 8 0 0 1 0 11" fill="none" stroke="#fff" />
          </svg>
          <svg width="21" height="17" viewBox="0 0 21 17" className="ml-[10px]">
            <path d="M7 5h11v9H7z" fill="none" stroke="#fff" strokeWidth="1.500" />
            <path d="M9 7h7v5H9z" fill="#fff" />
            <rect x="19" y="7.500" width="2" height="4" fill="#fff" />
            <path d="M1 3h5v3a2.500 2.500 0 0 1-5 0zM2 0v3M5 0v3" fill="#fff" stroke="#fff" />
          </svg>
          <div className="ml-[14px] w-[68px] text-right leading-[20px] whitespace-nowrap">
            <div className="text-[13.5px]">3:32 PM</div>
            <div>1/3/2022</div>
          </div>
          <div className="ml-[10px] mr-[24px] w-[20px] h-[20px] rounded-full bg-[#4cc2ff] text-black text-[13px] flex items-center justify-center">1</div>
        </div>
      </div>
    </div>
  );
}
